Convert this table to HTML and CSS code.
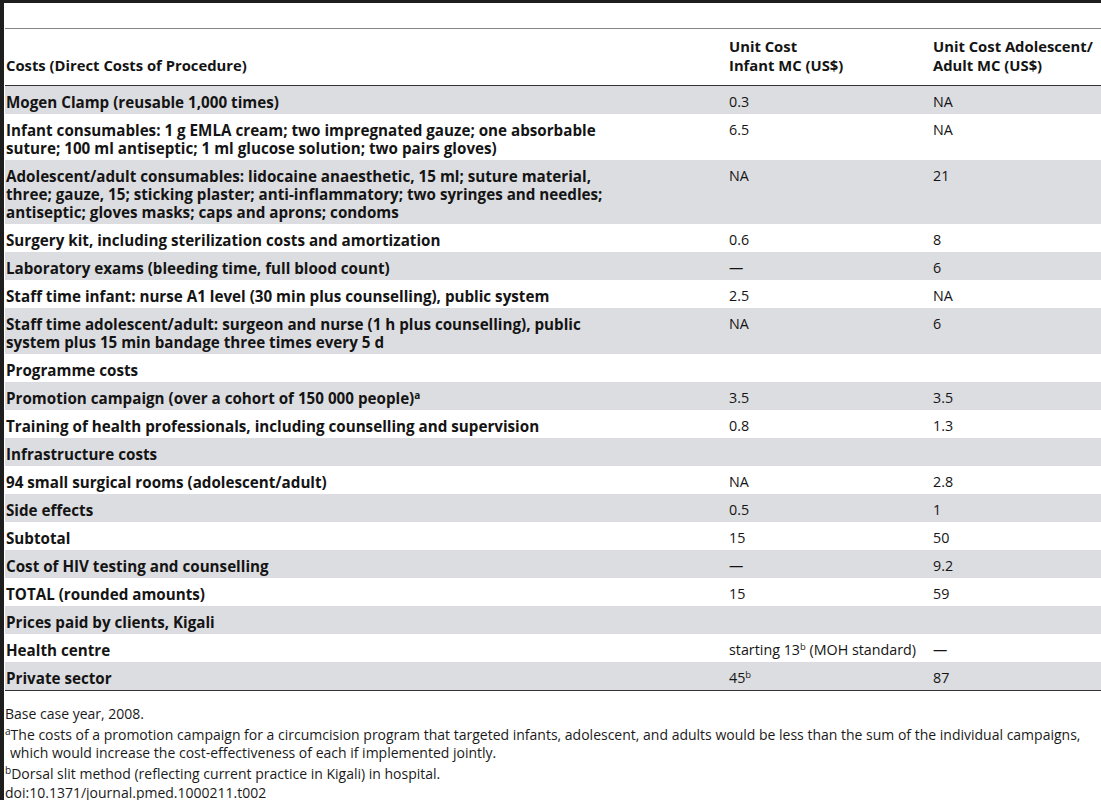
FILE: index.html
```html
<!DOCTYPE html>
<html lang="en">
<head>
    <meta charset="UTF-8">
    <meta name="viewport" content="width=device-width, initial-scale=1.0">
    <title>Table 2. Unit costs of male circumcision</title>
    <link rel="stylesheet" href="styles.css">
</head>
<body>
    <div class="table-top"></div>
    <table class="cost-table">
        <colgroup>
            <col class="c-item">
            <col class="c-infant">
            <col class="c-adult">
        </colgroup>
        <thead>
            <tr>
                <th>Costs (Direct Costs of Procedure)</th>
                <th>Unit Cost<br>Infant MC (US$)</th>
                <th>Unit Cost Adolescent/<br>Adult MC (US$)</th>
            </tr>
        </thead>
        <tbody>
            <tr><td>Mogen Clamp (reusable 1,000 times)</td><td>0.3</td><td>NA</td></tr>
            <tr><td>Infant consumables: 1 g EMLA cream; two impregnated gauze; one absorbable<br>suture; 100 ml antiseptic; 1 ml glucose solution; two pairs gloves)</td><td>6.5</td><td>NA</td></tr>
            <tr><td>Adolescent/adult consumables: lidocaine anaesthetic, 15 ml; suture material,<br>three; gauze, 15; sticking plaster; anti-inflammatory; two syringes and needles;<br>antiseptic; gloves masks; caps and aprons; condoms</td><td>NA</td><td>21</td></tr>
            <tr><td>Surgery kit, including sterilization costs and amortization</td><td>0.6</td><td>8</td></tr>
            <tr><td>Laboratory exams (bleeding time, full blood count)</td><td>&mdash;</td><td>6</td></tr>
            <tr><td>Staff time infant: nurse A1 level (30 min plus counselling), public system</td><td>2.5</td><td>NA</td></tr>
            <tr><td>Staff time adolescent/adult: surgeon and nurse (1 h plus counselling), public<br>system plus 15 min bandage three times every 5 d</td><td>NA</td><td>6</td></tr>
            <tr><td>Programme costs</td><td></td><td></td></tr>
            <tr><td>Promotion campaign (over a cohort of 150 000 people)<sup>a</sup></td><td>3.5</td><td>3.5</td></tr>
            <tr><td>Training of health professionals, including counselling and supervision</td><td>0.8</td><td>1.3</td></tr>
            <tr><td>Infrastructure costs</td><td></td><td></td></tr>
            <tr><td>94 small surgical rooms (adolescent/adult)</td><td>NA</td><td>2.8</td></tr>
            <tr><td>Side effects</td><td>0.5</td><td>1</td></tr>
            <tr><td>Subtotal</td><td>15</td><td>50</td></tr>
            <tr><td>Cost of HIV testing and counselling</td><td>&mdash;</td><td>9.2</td></tr>
            <tr><td>TOTAL (rounded amounts)</td><td>15</td><td>59</td></tr>
            <tr><td>Prices paid by clients, Kigali</td><td></td><td></td></tr>
            <tr><td>Health centre</td><td>starting 13<sup>b</sup> (MOH standard)</td><td>&mdash;</td></tr>
            <tr><td>Private sector</td><td>45<sup>b</sup></td><td>87</td></tr>
        </tbody>
    </table>

    <!-- 표 아래 각주 -->
    <div class="notes">
        <p>Base case year, 2008.</p>
        <p class="fn"><sup>a</sup>The costs of a promotion campaign for a circumcision program that targeted infants, adolescent, and adults would be less than the sum of the individual campaigns,<br>which would increase the cost-effectiveness of each if implemented jointly.</p>
        <p class="fn last"><sup>b</sup>Dorsal slit method (reflecting current practice in Kigali) in hospital.</p>
        <p>doi:10.1371/journal.pmed.1000211.t002</p>
    </div>
</body>
</html>
```

FILE: styles.css
```css
* {margin:0;padding:0;box-sizing:border-box;}
body {font-family:"Open Sans","Noto Sans",sans-serif;color:#141414;background:#fff;
      border-left:4px solid #1e1e1e;border-top:3px solid #1e1e1e;min-height:800px;
}

/* 표 제목이 잘린 윗부분 */
.table-top {height:26px;margin-left:1px;border-bottom:1px solid #858585;}

.cost-table {width:calc(100% - 1px);margin-left:1px;border-collapse:collapse;table-layout:fixed;
             font-size:14.3px;line-height:18px;
}
.c-item {width:719px;}
.c-infant {width:204px;}

.cost-table th {text-align:left;vertical-align:bottom;font-weight:700;font-size:14.8px;
                line-height:19px;padding:8px 5px 10px;border-bottom:1px solid #333;
}
.cost-table td {vertical-align:top;padding:7px 5px 3px;}
.cost-table th:first-child,
.cost-table td:first-child {padding-left:1px;}
.cost-table td:first-child {font-weight:700;font-size:15.2px;}

/* 홀수 줄 회색 */
.cost-table tbody tr:nth-child(odd) {background:#dcdde0;}
.cost-table tbody tr:last-child td {border-bottom:1px solid #333;}

sup {font-size:0.66em;line-height:0;vertical-align:0.5em;}

/* 각주 */
.notes {padding:14px 0 0 1px;font-size:14px;line-height:18px;color:#1a1a1a;}
.notes p {margin-bottom:3px;}
.notes .fn {padding-left:5px;text-indent:-5px;}
.notes .fn.last {margin-bottom:1px;}
.notes .fn sup {font-size:0.72em;}
```
